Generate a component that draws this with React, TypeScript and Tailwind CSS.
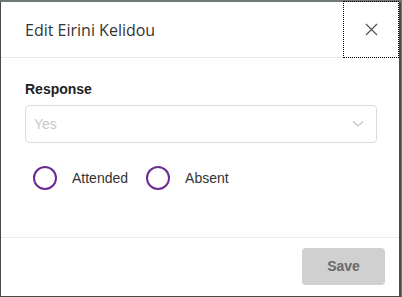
import { useState } from 'react';

export default function App() {
  const [choice, setChoice] = useState<string | null>(null);

  return (
    <div className="w-[402px] h-[297px] bg-[#6f7777] overflow-hidden pt-[2px]">
      <div
        className="relative w-[401px] h-[295px] bg-white border-l border-r-2 border-b border-[#4a4a4a] flex flex-col"
        style={{ fontFamily: '"Open Sans", sans-serif' }}
      >
        {/* header */}
        <div className="h-[56px] flex items-center justify-between pl-[24px] border-b border-[#e8e8e8]">
          <h2 className="text-[16px] text-[#333] mt-[1px]">Edit Eirini Kelidou</h2>
          <button
            className="w-[56px] h-[57px] -mt-[1px] flex items-center justify-center outline-1 outline-dotted outline-black -outline-offset-1 text-[#555]"
            aria-label="Close"
          >
            <svg width="13" height="13" viewBox="0 0 13 13" fill="none" stroke="currentColor" strokeWidth="1.2">
              <path d="M1 1 L12 12 M12 1 L1 12" />
            </svg>
          </button>
        </div>

        {/* body */}
        <div className="flex-1 px-[24px] pt-[22px]" style={{ fontFamily: '"Liberation Sans", Arial, sans-serif' }}>
          <label className="block text-[14px] font-bold text-[#222] leading-[18px]">Response</label>
          <div className="mt-[7px] h-[38px] w-[352px] border border-[#dcdcdc] rounded-[4px] flex items-center justify-between pl-[8px] pr-[12px]">
            <span className="text-[14px] text-[#c8c8c8]">Yes</span>
            <svg width="12" height="8" viewBox="0 0 12 8" fill="none" stroke="#c4c4c4" strokeWidth="1.3">
              <path d="M1 1.5 L6 6 L11 1.5" />
            </svg>
          </div>
          <div className="mt-[23px] flex items-center pl-[8px]">
            {['Attended', 'Absent'].map((label) => (
              <button
                key={label}
                onClick={() => setChoice(label)}
                className="flex items-center mr-[18px]"
              >
                <span className="w-[24px] h-[24px] rounded-full border-2 border-[#6a2c91] flex items-center justify-center">
                  {choice === label && <span className="w-[12px] h-[12px] rounded-full bg-[#6a2c91]" />}
                </span>
                <span className="ml-[15px] text-[14px] text-[#333]">{label}</span>
              </button>
            ))}
          </div>
        </div>

        {/* footer */}
        <div className="h-[59px] border-t border-[#ebebeb] flex items-start justify-end pr-[14px] pt-[10px]">
          <button
            className="w-[83px] h-[37px] rounded-[4px] bg-[#d0d0d0] text-[#6a6a6a] text-[14px] font-bold"
            style={{ fontFamily: '"Liberation Sans", Arial, sans-serif' }}
          >
            Save
          </button>
        </div>
      </div>
    </div>
  );
}
